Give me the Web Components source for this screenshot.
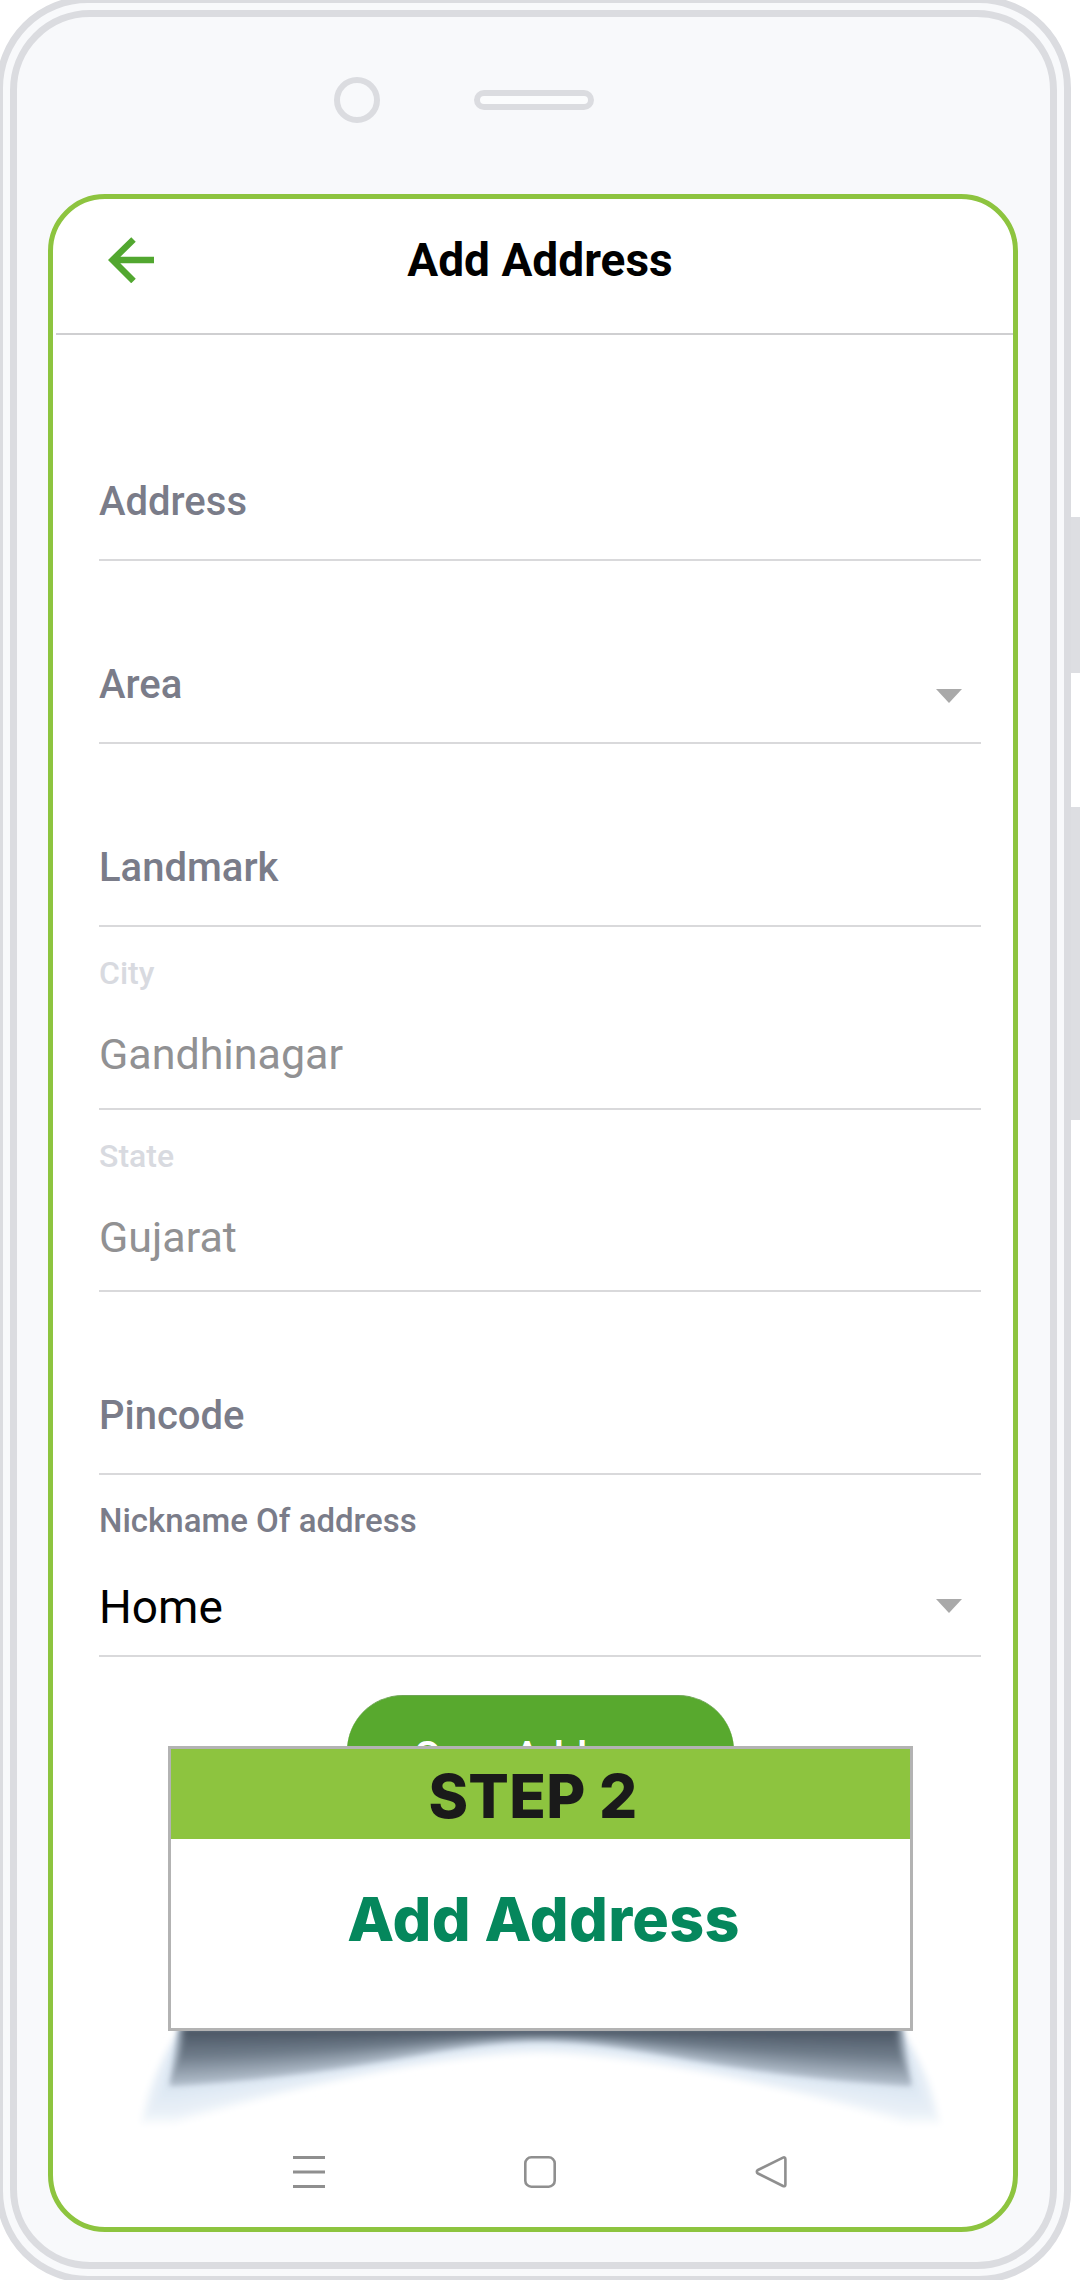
<!DOCTYPE html>
<html lang="en">
<head>
<meta charset="utf-8">
<title>Add Address</title>
<style>
html,body{margin:0;padding:0;background:#fff;overflow:hidden;height:2280px}
body{font-family:Roboto,"Liberation Sans",sans-serif}
</style>
</head>
<body>
<device-frame>
  <app-screen>
    <app-header>Add Address</app-header>
    <address-form>
      <form-field first>Address</form-field>
      <form-field select>Area</form-field>
      <form-field>Landmark</form-field>
      <form-field filled float="City">Gandhinagar</form-field>
      <form-field filled float="State" short>Gujarat</form-field>
      <form-field>Pincode</form-field>
      <form-field nick select float="Nickname Of address" short>Home</form-field>
    </address-form>
    <save-button>Save Address</save-button>
    <nav-bar></nav-bar>
    <step-card step="STEP 2">Add Address</step-card>
  </app-screen>
</device-frame>
<script>
function el(name, css, html, setup){
  customElements.define(name, class extends HTMLElement{
    constructor(){
      super();
      const r=this.attachShadow({mode:'open'});
      r.innerHTML='<style>'+css+'</style>'+(typeof html==='function'?html(this):html);
    }
    connectedCallback(){ if(setup) setup(this); }
  });
}

el('device-frame',`
:host{display:block;position:relative;width:1080px;height:2280px;overflow:hidden}
.outer{box-sizing:border-box;width:1075px;height:2287px;margin:-4px 0 0 -4px;padding:7px;border:7px solid #dbdce0;border-radius:92px;background:#f8f9fb}
.inner{box-sizing:border-box;height:100%;border:7px solid #dbdce0;border-radius:80px;background:#f8f9fb;display:flex;flex-direction:column}
.notch{height:177px;flex:none;box-sizing:border-box;display:flex;align-items:center;padding:0 0 12px 317px;gap:94px}
.cam{box-sizing:border-box;width:46px;height:46px;border:6.5px solid #dbdce0;border-radius:50%}
.spk{box-sizing:border-box;width:120px;height:20px;border:6.5px solid #dbdce0;border-radius:10px;background:#fbfcfd}
.side{position:absolute;right:0;width:9px;background:#dddee2}
.a{top:517px;height:156px}.b{top:807px;height:313px}
`,`<div class="side a"></div><div class="side b"></div>
<div class="outer"><div class="inner"><div class="notch"><div class="cam"></div><div class="spk"></div></div><slot></slot></div></div>`);

el('app-screen',`
:host{display:block;position:relative;box-sizing:border-box;width:970px;height:2038px;margin-left:31px;border:5px solid #8dc43f;border-radius:57px;background:#fff}
`,`<slot></slot>`);

el('app-header',`
:host{display:block;margin-left:3px;border-bottom:2px solid #cfcfd1}
.bar{height:134px;box-sizing:border-box;padding:0 87px 12px 52px;display:flex;align-items:center;margin-top:0}
svg{width:46px;height:46px;flex:none;display:block}
.t{flex:1;text-align:center;font:700 46px/50px Roboto,sans-serif;color:#000}
`,`<div class="bar"><svg viewBox="0 0 46 46" fill="none"><path d="M25.5 2.5 L4.5 23 L25.5 44 M5 23 H46" stroke="#52a730" stroke-width="6.4"/></svg><div class="t"><slot></slot></div></div>`);

el('address-form',`
:host{display:block;padding:43px 32px 0 46px}
`,`<slot></slot>`);

el('form-field',`
:host{display:flex;flex-direction:column;justify-content:flex-end;box-sizing:border-box;height:183px;border-bottom:2px solid #d9d9db;padding-bottom:32px;color:#7a7c89;font:500 40px/50px Roboto,sans-serif}
:host([short]){height:182px}
:host([filled]){padding-bottom:29.5px;color:#919193;font-weight:400;font-size:43px}
:host([filled][short]){padding-bottom:28px}
:host([nick]),:host([nick][short]){padding-bottom:23px;color:#000;font-weight:400;font-size:46px}
.f{display:none;font:500 32px/36px Roboto,sans-serif;margin-bottom:38px;color:#d8dae0}
:host([float]) .f{display:block}
:host([nick]) .f{color:#7a7c89;margin-bottom:43px;font-size:33px}
.row{display:flex;justify-content:space-between;align-items:flex-start}
.car{display:none;width:0;height:0;border-left:13px solid transparent;border-right:13px solid transparent;border-top:14px solid #a9a9a9;margin:29px 19px 0 0}
:host([select]) .car{display:block}
:host([nick]) .car{margin-top:17px}
`,(h)=>`<div class="f">${h.getAttribute('float')||''}</div><div class="row"><div><slot></slot></div><div class="car"></div></div>`);

el('save-button',`
:host{display:flex;align-items:center;justify-content:center;box-sizing:border-box;width:387px;height:112px;margin:38px 0 0 293.5px;padding-top:8px;border-radius:56px;background:#58a92e;border-top:1px solid #6fa556;color:#fff;font:500 41px/48px Roboto,sans-serif}
`,`<slot></slot>`);

el('nav-bar',`
:host{display:flex;gap:199px;position:absolute;left:240px;top:1957px}
svg{width:32px;height:32px;display:block;fill:none;stroke:#8f8f8f;stroke-width:2.6}
`,`<svg viewBox="0 0 32 32"><path d="M0 1.5H32M0 16H32M0 30.5H32" stroke-width="3"/></svg>
<svg viewBox="0 0 32 32"><rect x="1.3" y="1.3" width="29.4" height="29.4" rx="6"/></svg>
<svg viewBox="0 0 32 32"><path d="M30.4 3.2C30.4 1.6 29.4 1 28 1.7L3 14C1.4 14.9 1.4 16.6 3 17.5L28 30C29.4 30.7 30.4 30 30.4 28.4Z"/></svg>`);

el('step-card',`
:host{display:block;position:absolute;left:115px;top:1547px;width:745px;height:285px}
.card{position:relative;box-sizing:border-box;height:285px;border:3px solid #b3b3b3;background:#fff;font-family:Inter,"Liberation Sans",sans-serif}
.hd{height:90px;background:#8dc43f;color:#1a1a1a;font-weight:800;font-size:60px;line-height:95px;text-align:center;padding-right:15px;letter-spacing:.3px}
.bd{color:#05875c;font-weight:800;font-size:61px;line-height:72px;text-align:center;padding:44px 0 0 6px;letter-spacing:.3px}
svg{position:absolute;left:-48px;top:282px;width:840px;height:112px;display:block}
`,(h)=>{
  const hex=a=>a.map(c=>Math.round(c));
  const stops=[[0,[74,85,99]],[.5,[112,125,139]],[1,[176,188,201]],[1.06,[219,230,242]],[1.7,[234,241,248]],[2,[255,255,255]]];
  const col=t=>{for(let i=1;i<stops.length;i++){if(t<=stops[i][0]){const[a,c]=stops[i-1],[b,d]=stops[i];const k=(t-a)/(b-a);return 'rgb('+hex(c.map((v,j)=>v+(d[j]-v)*k)).join(',')+')'}}return '#fff'};
  const f=u=>u*u/(u*u+.4)*1.4;
  const A=u=>10+44*f(u), B=u=>Math.min(99,24+72*Math.pow(u,1.6));
  let light='',dark='';
  for(let i=60;i>=0;i--){
    const t=i/30, cx=540.5;
    const xb=t<=1?192-22*t:170-(t-1)*32;
    const xtop=t<=1?186-8*t:178;
    const xr=2*cx-xb;
    const dep=x=>{
      const u=Math.min(1,Math.abs(x-cx)/365);
      return t<=1?t*A(u):A(u)+(t-1)*(B(u)-A(u));
    };
    const yb=2031+dep(xb);
    const qx=Math.min(xb+4,xtop), qy=2031+(yb-2031)*.55;
    let d='M'+xtop+' 2028 L'+xtop+' 2031 Q'+qx+' '+qy+' '+xb+' '+yb;
    for(let x=xb+4;x<xr;x+=4){d+=' L'+x.toFixed(1)+' '+(2031+dep(x)).toFixed(1)}
    d+=' L'+xr+' '+yb+' Q'+(2*cx-qx)+' '+qy+' '+(2*cx-xtop)+' 2031 L'+(2*cx-xtop)+' 2028Z';
    const s='<path d="'+d+'" fill="'+col(t)+'"/>';
    if(t>1) light+=s; else dark+=s;
  }
  return `<svg viewBox="120 2028 840 112"><defs><filter id="b" x="-5%" y="-20%" width="110%" height="140%"><feGaussianBlur stdDeviation="3"/></filter><filter id="c" x="-5%" y="-20%" width="110%" height="140%"><feGaussianBlur stdDeviation="2.5"/></filter></defs><g filter="url(#b)">${light}</g><g filter="url(#c)">${dark}</g></svg>
  <div class="card"><div class="hd">${h.getAttribute('step')}</div><div class="bd"><slot></slot></div></div>`;
});
</script>
</body>
</html>
